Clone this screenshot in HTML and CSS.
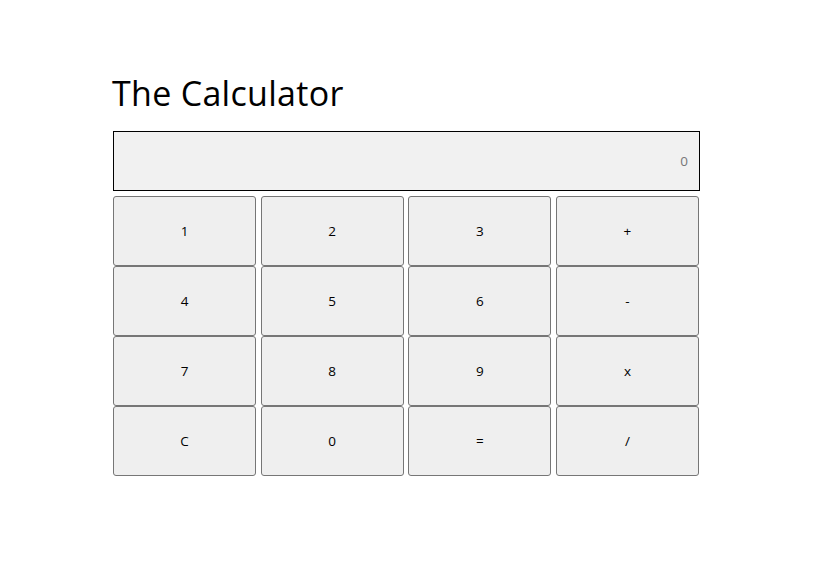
FILE: index.html
```html
<!DOCTYPE html>
<html lang="en">
<head>
<meta charset="utf-8">
<title>The Calculator</title>
<link rel="stylesheet" href="styles.css">
</head>
<body>
<main class="calculator">
  <h1 class="title">The Calculator</h1>
  <div class="display"><span class="display-value">0</span></div>
  <div class="keys">
    <button class="key">1</button>
    <button class="key">2</button>
    <button class="key">3</button>
    <button class="key">+</button>
    <button class="key">4</button>
    <button class="key">5</button>
    <button class="key">6</button>
    <button class="key">-</button>
    <button class="key">7</button>
    <button class="key">8</button>
    <button class="key">9</button>
    <button class="key">x</button>
    <button class="key">C</button>
    <button class="key">0</button>
    <button class="key">=</button>
    <button class="key">/</button>
  </div>
</main>
</body>
</html>
```

FILE: styles.css
```css
html, body {
  margin: 0;
  padding: 0;
  background: #ffffff;
}

body {
  font-family: "Open Sans", "Noto Sans", sans-serif;
  color: #000;
}

.calculator {
  width: 587px;
  margin: 0 auto;
  padding-top: 72px;
}

.title {
  margin: 0 0 17px -1px;
  font-size: 34px;
  font-weight: 400;
  line-height: 42px;
  letter-spacing: 0.3px;
}

.display {
  box-sizing: border-box;
  height: 60px;
  border: 1px solid #000;
  background: #f1f1f1;
  display: flex;
  align-items: center;
  justify-content: flex-end;
  padding-right: 11px;
  margin-bottom: 5px;
}

.display-value {
  font-size: 13.5px;
  color: #777;
}

.keys {
  width: 586px;
  display: grid;
  grid-template-columns: repeat(4, 1fr);
  grid-auto-rows: 70px;
  column-gap: 4.5px;
  row-gap: 0;
}

.key {
  box-sizing: border-box;
  margin: 0;
  padding: 0;
  background: #efefef;
  border: 1px solid #767676;
  border-radius: 3px;
  font-family: "Open Sans", "Noto Sans", sans-serif;
  font-size: 13.5px;
  color: #000;
}
```
